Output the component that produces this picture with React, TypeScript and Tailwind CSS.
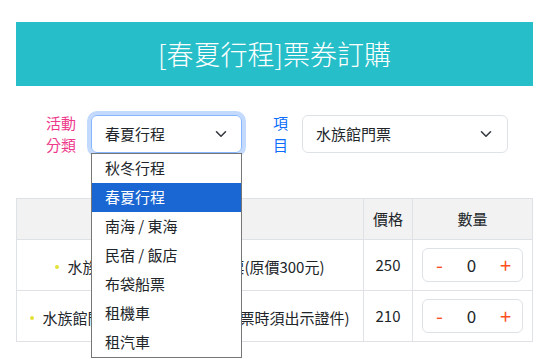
import React from 'react';

const options = ['秋冬行程', '春夏行程', '南海 / 東海', '民宿 / 飯店', '布袋船票', '租機車', '租汽車'];

const rows = [
  { name: '水族館門票 - 成人一般全票(原價300元)', price: 250 },
  { name: '水族館門票 - 學生優待半票(購票時須出示證件)', price: 210 },
];

const Chevron: React.FC = () => (
  <svg width="12" height="8" viewBox="0 0 12 8" fill="none" stroke="#343a40" strokeWidth="1.6" strokeLinecap="round" strokeLinejoin="round">
    <path d="M1.5 1.8 6 6.2l4.5-4.4" />
  </svg>
);

const Stepper: React.FC = () => (
  <div className="flex items-center justify-between w-[101px] h-[34px] mx-auto border border-[#dee2e6] rounded-md pl-[13px] pr-[11px] text-[16px]">
    <span className="text-[#fd4f1f] text-[20px] leading-none">-</span>
    <span className="text-[#212529] text-[17px]">0</span>
    <span className="text-[#fd4f1f] text-[20px] leading-none">+</span>
  </div>
);

export default function App() {
  return (
    <div
      className="w-[542px] h-[359px] overflow-hidden bg-white text-[#212529] text-[15px]"
      style={{ fontFamily: '"Noto Sans CJK TC", "Noto Sans", sans-serif' }}
    >
      <div className="ml-4 w-[517px] pt-[22px]">
        <div className="h-[64px] bg-[#26bfc9] flex items-center justify-center text-white text-[27px] font-light">
          [春夏行程]票券訂購
        </div>

        <div className="flex items-center pl-[30px] mt-[29px] h-[38px]">
          <div className="w-[31px] leading-[22px] text-[#ee3a8c]">活動<br />分類</div>
          <div className="relative ml-[14px]">
            <div className="w-[151px] h-[38px] rounded-md border border-[#86b7fe] ring-4 ring-[#c4dafd] flex items-center justify-between pl-[13px] pr-[14px]">
              <span>春夏行程</span>
              <Chevron />
            </div>
            <div className="absolute left-0 top-[38px] w-[151px] bg-white border border-[#767676] z-10">
              {options.map((o) => (
                <div
                  key={o}
                  className={`h-[29px] flex items-center pl-[13px] ${o === '春夏行程' ? 'bg-[#1a66d2] text-white' : 'text-[#212529]'}`}
                >
                  {o}
                </div>
              ))}
            </div>
          </div>
          <div className="ml-[31px] w-[15px] leading-[22px] text-[#0d6efd]">項<br />目</div>
          <div className="ml-[14px] w-[206px] h-[38px] rounded-md border border-[#dee2e6] flex items-center justify-between pl-[13px] pr-[15px]">
            <span>水族館門票</span>
            <Chevron />
          </div>
        </div>

        <table className="mt-[45px] w-[517px] border-collapse border border-[#dee2e6]">
          <thead>
            <tr className="h-[41px] bg-[#f2f2f2]">
              <th className="border border-[#dee2e6] font-normal"></th>
              <th className="w-[49px] border border-[#dee2e6] font-normal">價格</th>
              <th className="w-[120px] border border-[#dee2e6] font-normal">數量</th>
            </tr>
          </thead>
          <tbody>
            {rows.map((r) => (
              <tr key={r.price} className="h-[51px]">
                <td className="border border-[#dee2e6] text-center">
                  <span className="inline-flex items-center">
                    <span className="w-[4px] h-[4px] rounded-full bg-[#e2e23a] mr-[8px]"></span>
                    {r.name}
                  </span>
                </td>
                <td className="border border-[#dee2e6] text-center">{r.price}</td>
                <td className="border border-[#dee2e6]">
                  <Stepper />
                </td>
              </tr>
            ))}
          </tbody>
        </table>
      </div>
    </div>
  );
}
